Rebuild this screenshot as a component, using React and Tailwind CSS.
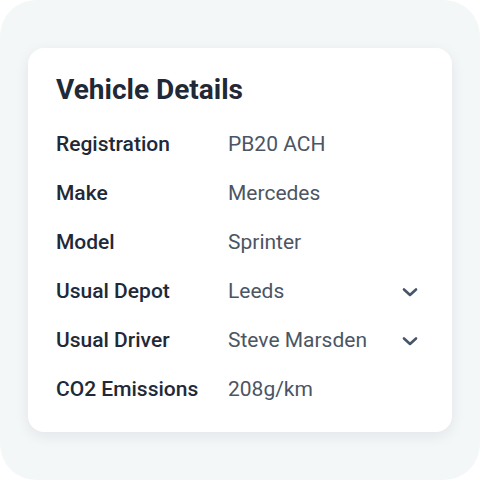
import React from "react";

const Chevron = () => (
  <svg width="24" height="24" viewBox="0 0 24 24" fill="none" stroke="#475569" strokeWidth="2.6" strokeLinecap="round" strokeLinejoin="round">
    <path d="M6 9.5l6 5.5 6-5.5" />
  </svg>
);

const rows = [
  ["Registration", "PB20 ACH", false],
  ["Make", "Mercedes", false],
  ["Model", "Sprinter", false],
  ["Usual Depot", "Leeds", true],
  ["Usual Driver", "Steve Marsden", true],
  ["CO2 Emissions", "208g/km", false],
];

export default function App() {
  return (
    <div className="w-[480px] h-[480px] bg-white" style={{ fontFamily: "Roboto, 'Noto Sans', sans-serif" }}>
      <div className="w-[480px] h-[480px] rounded-[36px] bg-[#f4f7f8] px-[28px] pt-[48px]">
        <div className="w-[424px] h-[384px] rounded-[16px] bg-white shadow-[0_4px_14px_rgba(15,23,42,0.08)] pl-[28px] pr-[30px] pt-[25px]">
          <h1 className="text-[28px] leading-[34px] font-bold text-[#1f2937] mb-[13px]">Vehicle Details</h1>
          <div className="flex flex-col">
            {rows.map(([k, v, dd]) => (
              <div key={k} className="flex items-center h-[49px]">
                <div className="w-[172px] text-[21px] font-medium text-[#1f2937]">{k}</div>
                <div className="flex-1 text-[21px] text-[#4b5563]">{v}</div>
                {dd && <Chevron />}
              </div>
            ))}
          </div>
        </div>
      </div>
    </div>
  );
}
